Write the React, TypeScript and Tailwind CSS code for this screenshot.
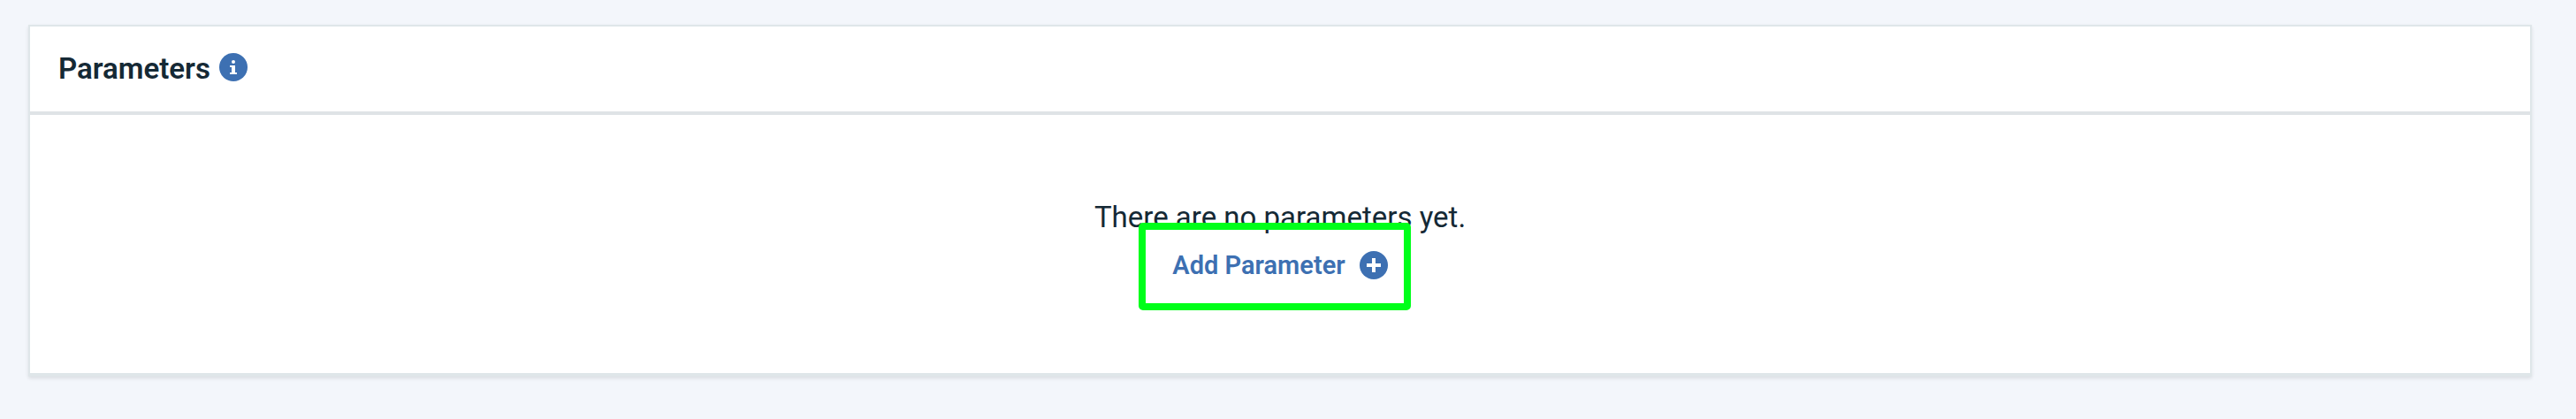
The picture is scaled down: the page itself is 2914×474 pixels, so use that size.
function InfoIcon() {
  return (
    <svg viewBox="0 0 32 32" className="size-8" aria-hidden="true">
      <circle cx="16" cy="16" r="16" fill="#3d70b2" />
      <circle cx="16" cy="10" r="2" fill="#fff" />
      <path d="M12 14h6v8h2v2h-8v-2h2v-6h-2z" fill="#fff" />
    </svg>
  );
}

function AddIcon() {
  return (
    <svg viewBox="0 0 32 32" className="size-8" aria-hidden="true">
      <circle cx="16" cy="16" r="16" fill="#3d70b2" />
      <path d="M14 8h4v6h6v4h-6v6h-4v-6H8v-4h6z" fill="#fff" />
    </svg>
  );
}

export default function App() {
  return (
    <main className="min-h-screen bg-[#f3f6fb] pt-7 pr-[50px] pb-12 pl-8 font-['Roboto','Liberation_Sans',sans-serif] text-[#152935]">
      <section className="border-2 border-b-4 border-[#dfe6e9] bg-white shadow-[0_2px_4px_rgba(0,0,0,0.1)]">
        <header className="flex items-center gap-2.5 border-b-4 border-[#dfe3e6] px-8 pt-6 pb-7">
          <h2 className="pt-1 text-[33px] leading-10 font-semibold">Parameters</h2>
          <button type="button" aria-label="About parameters">
            <InfoIcon />
          </button>
        </header>
        <div className="flex flex-col items-center pt-24 pb-[88px]">
          <p className="text-[33px] leading-10">There are no parameters yet.</p>
          <div className="relative">
            <button
              type="button"
              className="flex h-[68px] items-center gap-4 text-[29px] leading-9 font-semibold text-[#3d70b2]"
            >
              Add Parameter
              <AddIcon />
            </button>
            <div className="pointer-events-none absolute -top-3.5 -right-[26px] -bottom-[17px] -left-[38px] rounded-[5px] border-8 border-[#00ff1a]" />
          </div>
        </div>
      </section>
    </main>
  );
}
